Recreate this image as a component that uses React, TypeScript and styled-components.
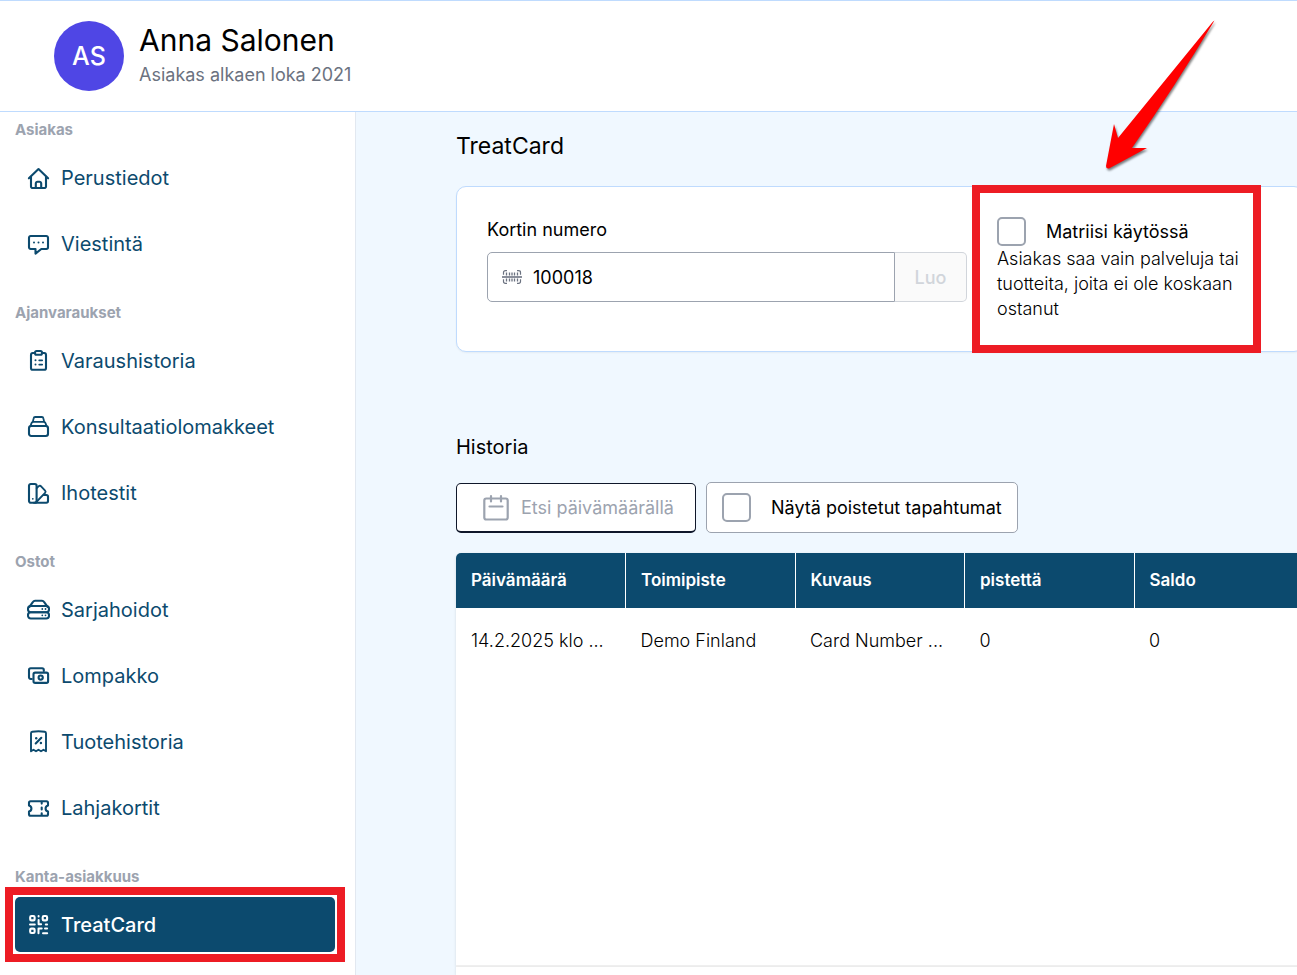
import React from "react";
import styled, { createGlobalStyle, css } from "styled-components";

const colors = {
  navy: "#0c4a6e",
  sky: "#f0f8ff",
  line: "#bfdbfe",
  gray: "#9ca3af",
  slate: "#6b7280",
  mark: "#ed1c24",
};

const GlobalStyle = createGlobalStyle`
  *, *::before, *::after { box-sizing: border-box; }
  body {
    margin: 0;
    background: #fff;
    color: #000;
    font-family: Inter, "Liberation Sans", sans-serif;
    font-size: 18px;
    line-height: 25px;
  }
  h1, h2, p { margin: 0; font-weight: 400; }
  input, button { font: inherit; color: inherit; }
`;

const Page = styled.div`
  display: flex;
  flex-direction: column;
  min-height: 100vh;
  overflow: hidden;
`;

const Header = styled.header`
  display: flex;
  align-items: center;
  gap: 15px;
  height: 112px;
  padding-left: 54px;
  border-top: 1px solid ${colors.line};
  border-bottom: 1px solid ${colors.line};
`;

const Avatar = styled.div`
  display: grid;
  place-items: center;
  width: 70px;
  height: 70px;
  border-radius: 50%;
  background: #4f46e5;
  color: #fff;
  font-size: 25px;
  font-weight: 500;
`;

const Name = styled.h1`
  font-size: 30px;
  line-height: 38px;
`;

const Since = styled.p`
  color: ${colors.slate};
  line-height: 32px;
`;

const Body = styled.div`
  display: flex;
  flex: 1;
`;

const Sidebar = styled.nav`
  flex: 0 0 356px;
  padding: 8px 20px 23px 15px;
  border-right: 1px solid #e2e8f0;
`;

const Group = styled.section`
  & + & { margin-top: 32px; }
`;

const GroupTitle = styled.h2`
  margin-bottom: 10px;
  color: ${colors.gray};
  font-size: 15px;
  font-weight: 700;
  line-height: 20px;
`;

const GroupItems = styled.div`
  display: flex;
  flex-direction: column;
  gap: 11px;
`;

const frame = css`
  content: "";
  position: absolute;
  border: 8px solid ${colors.mark};
  pointer-events: none;
`;

const NavItem = styled.a<{ $active?: boolean }>`
  position: relative;
  display: flex;
  align-items: center;
  gap: 11px;
  height: 55px;
  padding-left: 12px;
  border-radius: 5px;
  color: ${colors.navy};
  font-size: 20px;
  line-height: 26px;
  text-decoration: none;
  ${(p) =>
    p.$active &&
    css`
      background: ${colors.navy};
      color: #fff;
      font-weight: 500;
      &::after {
        ${frame}
        inset: -10px;
      }
    `}
`;

const NavIcon = styled.svg`
  width: 23px;
  height: 23px;
  fill: none;
  stroke: currentColor;
  stroke-width: 2.1;
  stroke-linecap: round;
  stroke-linejoin: round;
`;

const Main = styled.main`
  flex: 1;
  min-width: 0;
  display: flex;
  flex-direction: column;
  padding: 19px 0 0 100px;
  background: ${colors.sky};
`;

const Content = styled.div`
  flex: 1;
  display: flex;
  flex-direction: column;
  width: 100%;
  min-width: 848px;
`;

const Title = styled.h2<{ $small?: boolean }>`
  font-size: ${(p) => (p.$small ? 20 : 23)}px;
  line-height: 30px;
`;

const Card = styled.section`
  display: grid;
  grid-template-columns: 480px 246px;
  gap: 30px;
  margin: 25px 0 80px;
  padding: 30px;
  border: 1px solid ${colors.line};
  border-radius: 10px;
  background: #fff;
  box-shadow: 0 1px 2px rgba(0, 0, 0, 0.05);
`;

const FieldLabel = styled.label`
  display: block;
  margin-bottom: 10px;
`;

const FieldRow = styled.div`
  display: flex;
  height: 50px;
`;

const InputShell = styled.div`
  flex: 1;
  display: flex;
  align-items: center;
  gap: 11px;
  padding-left: 14px;
  border: 1px solid ${colors.gray};
  border-radius: 5px 0 0 5px;
`;

const BareInput = styled.input`
  flex: 1;
  min-width: 0;
  padding: 0;
  border: 0;
  outline: 0;
  background: transparent;
  &::placeholder { color: ${colors.gray}; opacity: 1; }
`;

const CreateButton = styled.button`
  width: 72px;
  padding: 0;
  border: 1px solid #d1d5db;
  border-left: 0;
  border-radius: 0 5px 5px 0;
  background: #fafafa;
  color: #d1d5db;
  font-weight: 500;
`;

const Option = styled.div`
  position: relative;
  &::after {
    ${frame}
    inset: -32px -18px -32px -25px;
  }
`;

const Arrow = styled.svg`
  position: absolute;
  left: 103px;
  bottom: calc(100% + 38px);
  width: 120px;
  height: 164px;
  overflow: visible;
  filter: drop-shadow(1px 2px 1px rgba(0, 0, 0, 0.5));
`;

const CheckLabel = styled.label<{ $boxed?: boolean }>`
  display: flex;
  align-items: center;
  gap: 20px;
  ${(p) =>
    p.$boxed &&
    css`
      height: 51px;
      padding: 0 15px;
      border: 1px solid ${colors.gray};
      border-radius: 5px;
      background: #fff;
    `}
`;

const Checkbox = styled.input`
  appearance: none;
  flex: none;
  width: 29px;
  height: 29px;
  margin: 0;
  border: 2px solid ${colors.gray};
  border-radius: 5px;
  background: #fff;
`;

const Hint = styled.p`
  font-weight: 300;
`;

const Filters = styled.div`
  display: flex;
  align-items: flex-end;
  gap: 10px;
  margin: 20px 0;
`;

const DateField = styled.label`
  display: flex;
  align-items: center;
  gap: 12px;
  width: 240px;
  height: 50px;
  padding-left: 26px;
  border: 1px solid #0f172a;
  border-bottom-width: 2px;
  border-radius: 5px;
  background: #fff;
`;

const TablePanel = styled.div`
  height: 414px;
  overflow: hidden;
  border-radius: 5px 5px 0 0;
  border-bottom: 2px solid #f0f0f0;
  background: #fff;
  box-shadow: 0 1px 3px rgba(0, 0, 0, 0.12);
`;

const PanelFooter = styled.div`
  flex: 1;
  background: #fff;
  box-shadow: 0 1px 3px rgba(0, 0, 0, 0.12);
`;

const Table = styled.table`
  width: 100%;
  table-layout: fixed;
  border-collapse: collapse;
  text-align: left;
`;

const HeadCell = styled.th`
  height: 55px;
  padding: 0 15px;
  border-right: 1px solid #fff;
  background: ${colors.navy};
  color: #fff;
  font-size: 17px;
  font-weight: 600;
`;

const Cell = styled.td`
  height: 65px;
  padding: 0 15px;
  font-weight: 300;
  white-space: nowrap;
`;

const dot = (x: number, y: number, r = 1) => (
  <circle key={`${x}-${y}`} cx={x} cy={y} r={r} fill="currentColor" stroke="none" />
);

const icons: Record<string, React.ReactNode> = {
  home: (
    <>
      <path d="M1.9 12.3 11.5 3l9.6 9.3" />
      <path d="M4 10.8v9.8A1.4 1.4 0 0 0 5.4 22h12.2a1.4 1.4 0 0 0 1.4-1.4v-9.8" />
      <path d="M8.8 21.6v-4.2a1.7 1.7 0 0 1 1.7-1.7h2a1.7 1.7 0 0 1 1.7 1.7v4.2" />
    </>
  ),
  chat: (
    <>
      <path d="M3.7 4h15.6A1.7 1.7 0 0 1 21 5.7v9.6a1.7 1.7 0 0 1-1.7 1.7h-5L8.5 21.6V17H3.7A1.7 1.7 0 0 1 2 15.3V5.7A1.7 1.7 0 0 1 3.7 4z" />
      {dot(7, 10.6)}
      {dot(11.5, 10.6)}
      {dot(16, 10.6)}
    </>
  ),
  clipboard: (
    <>
      <path d="M7.8 4H5.8A1.9 1.9 0 0 0 4 5.9v13A1.9 1.9 0 0 0 5.9 20.800h11.2a1.9 1.9 0 0 0 1.9-1.9v-13A1.9 1.9 0 0 0 17.200 4h-2" />
      <rect x="8" y="2" width="7" height="3.8" rx="1.5" />
      <path d="M12.2 11.300h3M12.200 15.600h3" strokeWidth="1.7" />
      {dot(8.5, 11.3)}
      {dot(8.5, 15.6)}
    </>
  ),
  stack: (
    <>
      <rect x="2" y="11" width="19" height="10" rx="2.2" />
      <path d="M3.4 11.200 4.600 7.900a1.600 1.600 0 0 1 1.500-1.100h10.800a1.600 1.600 0 0 1 1.500 1.100l1.200 3.300" strokeWidth="1.8" />
      <path d="M5.9 6.600l.7-3.200A1.700 1.700 0 0 1 8.200 2h6.600a1.700 1.700 0 0 1 1.600 1.400l.7 3.200" strokeWidth="1.8" />
    </>
  ),
  swatch: (
    <>
      <rect x="2" y="3" width="7.6" height="18.7" rx="1.8" />
      <path d="M9.7 7.200l2.100-2a1.600 1.600 0 0 1 2.300.1l4 4.400a1.600 1.600 0 0 1 0 2.200L9.300 21" strokeWidth="1.8" />
      <path d="M16.8 14h2.500a1.700 1.700 0 0 1 1.700 1.700v4.300a1.700 1.700 0 0 1-1.700 1.700H7" />
      {dot(5.8, 17.8, 0.9)}
    </>
  ),
  layers: (
    <>
      <rect x="1" y="8" width="21" height="6.3" rx="2.8" />
      <rect x="1" y="14.3" width="21" height="6.2" rx="2.8" />
      <path d="M2.4 8.800 6 3.800a2.400 2.400 0 0 1 2-1.100h7a2.400 2.400 0 0 1 2 1.100l3.600 5" />
      {dot(15.3, 11, 0.9)}
      {dot(18.5, 11, 0.9)}
      {dot(15.3, 17.3, 0.9)}
      {dot(18.5, 17.3, 0.9)}
    </>
  ),
  cash: (
    <>
      <path d="M4.8 15H3.700A1.700 1.700 0 0 1 2 13.300V6a1.700 1.700 0 0 1 1.700-1.700h11.400A1.700 1.700 0 0 1 16.800 6v1" />
      <rect x="6.5" y="8.6" width="14.6" height="10.3" rx="1.7" />
      <circle cx="13.7" cy="13.6" r="2.1" />
    </>
  ),
  receipt: (
    <>
      <path d="M4 21.300V3.300a1.600 1.600 0 0 1 1.300-1.600q6.200-.9 12.400 0A1.600 1.600 0 0 1 19 3.300v18l-2.500-1.500-2.500 1.500-2.500-1.500L9 21.300l-2.500-1.500z" strokeWidth="1.9" />
      <path d="M8.7 13.500l5.600-5.700" />
      {dot(9.2, 8.2, 1.2)}
      {dot(13.9, 13, 1.2)}
    </>
  ),
  ticket: (
    <>
      <path d="M3.5 5.200h16A1.500 1.500 0 0 1 21 6.700v2.700a3.200 3.200 0 0 0 0 6.200v2.700a1.500 1.500 0 0 1-1.500 1.500h-16A1.500 1.500 0 0 1 2 18.300v-2.700a3.200 3.200 0 0 0 0-6.200V6.700a1.500 1.500 0 0 1 1.500-1.500z" />
      <path d="M14.7 5.800v1.800M14.700 11.600v1.800M14.700 17.200V19" />
    </>
  ),
  qr: (
    <>
      <rect x="3.2" y="3" width="4.4" height="4.4" rx="1.2" />
      <rect x="15.7" y="3" width="4.4" height="4.4" rx="1.2" />
      <rect x="3.2" y="15.6" width="4.4" height="4.4" rx="1.2" />
      <path d="M11.6 3v.6M11.600 7v4.300h2.500M3 11.500h4.800M18.800 11.500h1.300M11.500 20.300v-4.800h3.200M18 15.500h2.100M16 20.200h4.200" strokeWidth="2" />
    </>
  ),
};

const groups = [
  { title: "Asiakas", items: [["Perustiedot", "home"], ["Viestintä", "chat"]] },
  {
    title: "Ajanvaraukset",
    items: [["Varaushistoria", "clipboard"], ["Konsultaatiolomakkeet", "stack"], ["Ihotestit", "swatch"]],
  },
  {
    title: "Ostot",
    items: [["Sarjahoidot", "layers"], ["Lompakko", "cash"], ["Tuotehistoria", "receipt"], ["Lahjakortit", "ticket"]],
  },
  { title: "Kanta-asiakkuus", items: [["TreatCard", "qr"]] },
];

const columns = ["Päivämäärä", "Toimipiste", "Kuvaus", "pistettä", "Saldo"];
const rows = [["14.2.2025 klo ...", "Demo Finland", "Card Number ...", "0", "0"]];

const BarcodeIcon = () => (
  <svg width="20" height="14" viewBox="0 0 20 14" fill="none" stroke={colors.slate} aria-hidden="true">
    <path d="M0 7h20" strokeWidth="1.6" />
    <path d="M1.5 4.800V2.500Q1.500.7 3.500.7H5M15 .7h1.500q2 0 2 1.800v2.300M1.500 9.200v2.300q0 1.800 2 1.800H5M15 13.300h1.500q2 0 2-1.800V9.200" strokeWidth="1.2" />
    <path d="M4.5 2.500v3M7.500 2.500v3M10 2.500v3M12.500 2.500v3M15.500 2.500v3M4.500 8.500v3M7.500 8.500v3M10 8.500v3M12.500 8.500v3M15.500 8.500v3" strokeWidth="1.3" />
  </svg>
);

const CalendarIcon = () => (
  <svg width="26" height="26" viewBox="0 0 26 26" fill="none" stroke={colors.gray} strokeWidth="2.2" strokeLinecap="round" aria-hidden="true">
    <rect x="1.3" y="3.5" width="23.4" height="21" rx="2" />
    <path d="M8 1.200v5.300M18 1.200v5.300M6.500 11.500h13" />
  </svg>
);

export default function App() {
  return (
    <Page>
      <GlobalStyle />
      <Header>
        <Avatar>AS</Avatar>
        <div>
          <Name>Anna Salonen</Name>
          <Since>Asiakas alkaen loka 2021</Since>
        </div>
      </Header>
      <Body>
        <Sidebar>
          {groups.map((group) => (
            <Group key={group.title}>
              <GroupTitle>{group.title}</GroupTitle>
              <GroupItems>
                {group.items.map(([label, icon]) => (
                  <NavItem key={label} href="#" $active={icon === "qr"}>
                    <NavIcon viewBox="0 0 23 23" aria-hidden="true">{icons[icon]}</NavIcon>
                    {label}
                  </NavItem>
                ))}
              </GroupItems>
            </Group>
          ))}
        </Sidebar>
        <Main>
          <Content>
            <Title>TreatCard</Title>
            <Card>
              <div>
                <FieldLabel htmlFor="card-number">Kortin numero</FieldLabel>
                <FieldRow>
                  <InputShell>
                    <BarcodeIcon />
                    <BareInput id="card-number" type="text" defaultValue="100018" />
                  </InputShell>
                  <CreateButton type="button" disabled>Luo</CreateButton>
                </FieldRow>
              </div>
              <Option>
                <Arrow viewBox="0 0 120 164" aria-hidden="true">
                  <path d="M114.500 5.500 Q113 6 111 9 L18 123 L14 109 L6 151 Q6 154 9 153.500 L47 133 L32 133 Q76 70 114.500 5.500z" fill="#ff0000" />
                </Arrow>
                <CheckLabel>
                  <Checkbox type="checkbox" />
                  Matriisi käytössä
                </CheckLabel>
                <Hint>Asiakas saa vain palveluja tai tuotteita, joita ei ole koskaan ostanut</Hint>
              </Option>
            </Card>
            <Title $small>Historia</Title>
            <Filters>
              <DateField>
                <CalendarIcon />
                <BareInput type="text" placeholder="Etsi päivämäärällä" aria-label="Etsi päivämäärällä" />
              </DateField>
              <CheckLabel $boxed>
                <Checkbox type="checkbox" />
                Näytä poistetut tapahtumat
              </CheckLabel>
            </Filters>
            <TablePanel>
              <Table>
                <thead>
                  <tr>
                    {columns.map((column) => (
                      <HeadCell key={column} scope="col">{column}</HeadCell>
                    ))}
                  </tr>
                </thead>
                <tbody>
                  {rows.map((row) => (
                    <tr key={row[0]}>
                      {row.map((value, i) => (
                        <Cell key={i}>{value}</Cell>
                      ))}
                    </tr>
                  ))}
                </tbody>
              </Table>
            </TablePanel>
            <PanelFooter />
          </Content>
        </Main>
      </Body>
    </Page>
  );
}
